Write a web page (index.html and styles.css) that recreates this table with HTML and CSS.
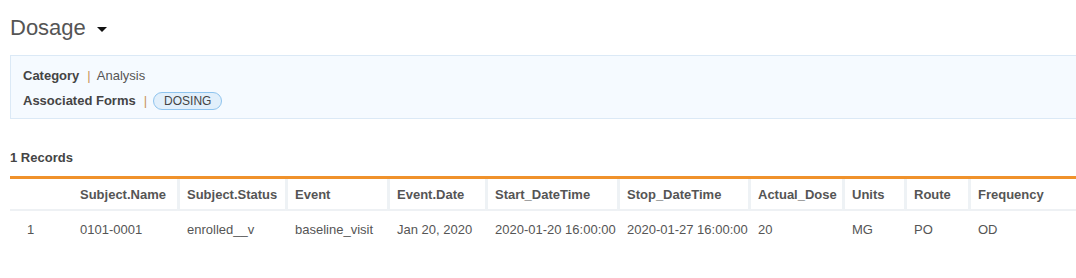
FILE: index.html
```html
<!DOCTYPE html>
<html lang="en">
<head>
    <meta charset="UTF-8">
    <meta name="viewport" content="width=device-width, initial-scale=1.0">
    <title>Dosage</title>
    <link rel="stylesheet" href="styles.css">
</head>
<body>
    <div class="page">
        <h1 class="form-title">Dosage <span class="caret"></span></h1>

        <div class="form-info">
            <div class="info-row">
                <span class="info-label">Category</span>
                <span class="info-sep">|</span>
                <span class="info-value">Analysis</span>
            </div>
            <div class="info-row">
                <span class="info-label">Associated Forms</span>
                <span class="info-sep">|</span>
                <span class="form-pill">DOSING</span>
            </div>
        </div>

        <div class="records-count">1 Records</div>

        <table class="records">
            <colgroup>
                <col class="c-num">
                <col class="c-name">
                <col class="c-status">
                <col class="c-event">
                <col class="c-evdate">
                <col class="c-start">
                <col class="c-stop">
                <col class="c-dose">
                <col class="c-units">
                <col class="c-route">
                <col class="c-freq">
            </colgroup>
            <thead>
                <tr>
                    <th class="num"></th>
                    <th class="first">Subject.Name</th>
                    <th>Subject.Status</th>
                    <th>Event</th>
                    <th>Event.Date</th>
                    <th>Start_DateTime</th>
                    <th>Stop_DateTime</th>
                    <th>Actual_Dose</th>
                    <th>Units</th>
                    <th>Route</th>
                    <th>Frequency</th>
                </tr>
            </thead>
            <tbody>
                <tr>
                    <td class="num">1</td>
                    <td class="first">0101-0001</td>
                    <td>enrolled__v</td>
                    <td>baseline_visit</td>
                    <td>Jan 20, 2020</td>
                    <td>2020-01-20 16:00:00</td>
                    <td>2020-01-27 16:00:00</td>
                    <td>20</td>
                    <td>MG</td>
                    <td>PO</td>
                    <td>OD</td>
                </tr>
            </tbody>
        </table>
    </div>
</body>
</html>
```

FILE: styles.css
```css
* {
    margin: 0;
    padding: 0;
    box-sizing: border-box;
}

body {
    font-family: 'Liberation Sans', Arial, sans-serif;
    font-size: 13px;
    color: #555;
    background: #fff;
    overflow: hidden;
}

.page {
    padding: 14px 0 0 10px;
    margin-right: -2px;
}

.form-title {
    font-size: 22px;
    font-weight: normal;
    color: #555;
    line-height: 28px;
    display: flex;
    align-items: center;
}

.caret {
    display: inline-block;
    width: 0;
    height: 0;
    margin-left: 11px;
    margin-top: 2px;
    border-left: 5px solid transparent;
    border-right: 5px solid transparent;
    border-top: 5px solid #111;
}

.form-info {
    margin-top: 13px;
    padding: 7px 12px 8px;
    background: #f5faff;
    border: 1px solid #dbe9f6;
    height: 64px;
}

.info-row {
    display: flex;
    align-items: center;
    height: 25px;
    color: #444;
}

.info-label {
    font-weight: bold;
    color: #444;
}

.info-sep {
    color: #c9955a;
    margin: 0 6px 0 8px;
}

.info-value {
    color: #555;
}

.form-pill {
    display: inline-block;
    height: 18px;
    line-height: 16px;
    padding: 0 10px;
    font-size: 12px;
    color: #444;
    background: #e1effb;
    border: 1px solid #8fc4ee;
    border-radius: 9px;
}

.records-count {
    margin-top: 31px;
    font-weight: bold;
    color: #444;
    line-height: 16px;
}

.records {
    margin-top: 10px;
    width: 100%;
    table-layout: fixed;
    border-collapse: separate;
    border-spacing: 0;
    border-top: 3px solid #f0922b;
}

.c-num { width: 61px; }
.c-name { width: 106px; }
.c-status { width: 108px; }
.c-event { width: 102px; }
.c-evdate { width: 98px; }
.c-start { width: 132px; }
.c-stop { width: 131px; }
.c-dose { width: 94px; }
.c-units { width: 62px; }
.c-route { width: 64px; }

.records th,
.records td {
    text-align: left;
    white-space: nowrap;
    overflow: hidden;
    padding-left: 7px;
}

.records th {
    height: 32px;
    font-weight: bold;
    color: #555;
    border-left: 3px solid #eef2f5;
    border-bottom: 2px solid #eef1f4;
}

.records th.num,
.records th.first {
    border-left: none;
}

.records th.first,
.records td.first {
    padding-left: 9px;
}

.records td {
    height: 34px;
    color: #555;
    border-left: 3px solid transparent;
    padding-top: 2px;
}

.records td.num,
.records td.first {
    border-left: none;
}

.records th.num,
.records td.num {
    padding-left: 17px;
}
```
